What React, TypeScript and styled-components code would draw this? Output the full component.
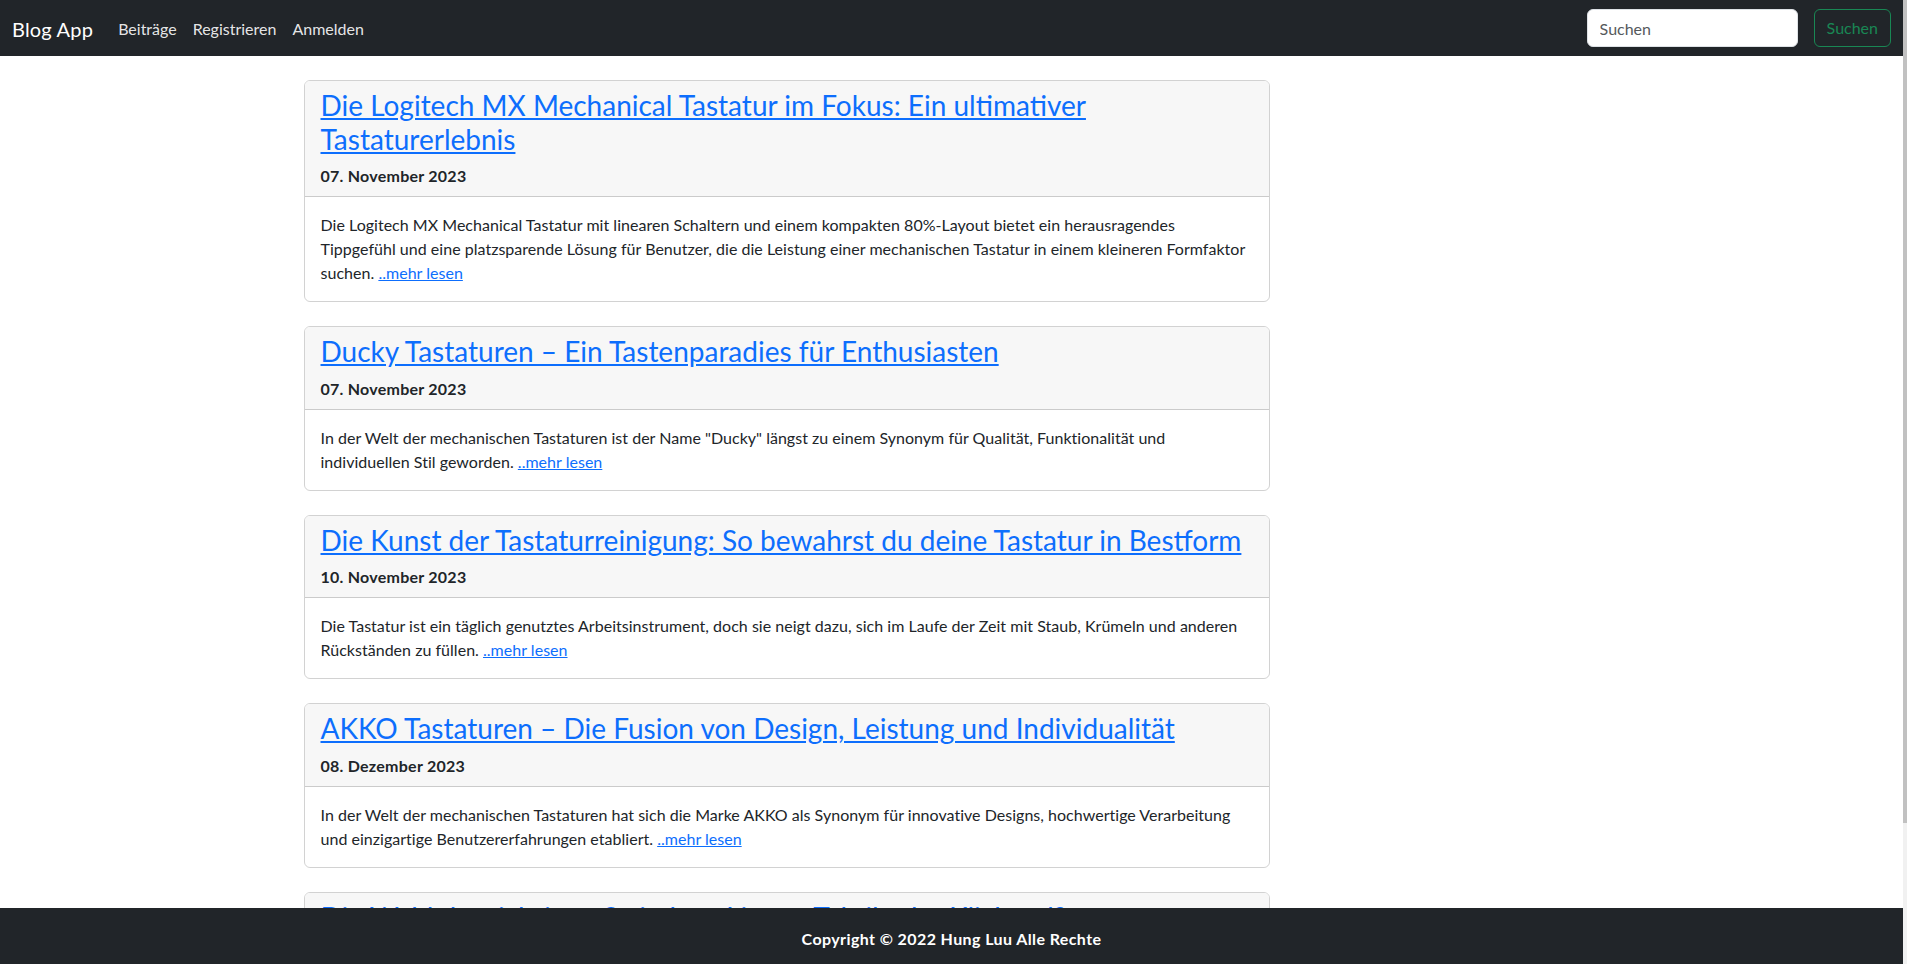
import React from "react";
import styled, { createGlobalStyle } from "styled-components";

const GlobalStyle = createGlobalStyle`
  *, *::before, *::after { box-sizing: border-box; }
  html { overflow: hidden; }
  body {
    margin: 0;
    padding-right: 4px;
    font-family: "Lato", "Liberation Sans", sans-serif;
    font-size: 16px;
    line-height: 1.5;
    color: #212529;
    background: #fff;
  }
`;

const Navbar = styled.nav`
  height: 56px;
  background: #212529;
  padding: 8px 12px;
  display: flex;
  align-items: center;
`;

const Brand = styled.a`
  font-size: 20px;
  line-height: 30px;
  padding: 6px 0 4px;
  margin-right: 17px;
  color: #fff;
  letter-spacing: 0.2px;
  text-decoration: none;
`;

const NavList = styled.ul`
  display: flex;
  list-style: none;
  margin: 0;
  padding: 0;
`;

const NavLink = styled.a`
  display: block;
  padding: 9px 8px 7px;
  color: rgba(255, 255, 255, 0.9);
  text-decoration: none;
`;

const SearchForm = styled.form`
  margin-left: auto;
  display: flex;
  gap: 16px;
`;

const SearchInput = styled.input`
  width: 211px;
  height: 38px;
  padding: 6px 12px;
  font: inherit;
  color: #212529;
  background: #fff;
  border: 1px solid #dee2e6;
  border-radius: 6px;
  &::placeholder { color: #55595c; }
`;

const SearchButton = styled.button`
  height: 38px;
  padding: 6px 12px;
  font: inherit;
  color: #198754;
  background: transparent;
  border: 1px solid #198754;
  border-radius: 6px;
`;

const Main = styled.main`
  max-width: 1320px;
  margin: 24px auto 0;
  padding: 0 12px 49px;
`;

const Row = styled.div`
  display: flex;
  margin: 0 -12px;
`;

const Col = styled.div`
  flex: 0 0 75%;
  padding: 0 12px;
`;

const Card = styled.article`
  border: 1px solid rgba(0, 0, 0, 0.175);
  border-radius: 6px;
  margin-bottom: 24px;
  overflow: hidden;
`;

const CardHeader = styled.header`
  padding: 8px 16px;
  background: #f7f7f7;
  border-bottom: 1px solid rgba(0, 0, 0, 0.175);
`;

const Title = styled.h3`
  margin: -1px 0 8px;
  padding-top: 1px;
  font-size: 28px;
  font-weight: 400;
  line-height: 1.2;
`;

const TitleLink = styled.a`
  color: #0d6efd;
  text-decoration: underline;
  text-underline-offset: 2px;
`;

const DateLine = styled.p`
  margin: 0;
  font-weight: 700;
  letter-spacing: 0.25px;
`;

const CardBody = styled.div`
  padding: 16px;
`;

const Excerpt = styled.p`
  margin: 0;
  letter-spacing: 0.025px;
`;

const MoreLink = styled.a`
  color: #0d6efd;
  text-decoration: underline;
`;

const Footer = styled.footer`
  position: fixed;
  left: 0;
  right: 4px;
  bottom: 0;
  height: 56px;
  background: #212529;
  color: #fff;
  font-weight: 700;
  letter-spacing: 0.4px;
  display: flex;
  align-items: center;
  justify-content: center;
  padding-top: 5px;
`;

const ScrollTrack = styled.div`
  position: fixed;
  top: 0;
  right: 0;
  bottom: 0;
  width: 4px;
  background: #f1f1f1;
`;

const ScrollThumb = styled.div`
  height: 823px;
  background: #c1c1c1;
`;

const posts = [
  {
    title: "Die Logitech MX Mechanical Tastatur im Fokus: Ein ultimativer Tastaturerlebnis",
    date: "07. November 2023",
    text: "Die Logitech MX Mechanical Tastatur mit linearen Schaltern und einem kompakten 80%-Layout bietet ein herausragendes Tippgefühl und eine platzsparende Lösung für Benutzer, die die Leistung einer mechanischen Tastatur in einem kleineren Formfaktor suchen.",
  },
  {
    title: "Ducky Tastaturen – Ein Tastenparadies für Enthusiasten",
    date: "07. November 2023",
    text: 'In der Welt der mechanischen Tastaturen ist der Name "Ducky" längst zu einem Synonym für Qualität, Funktionalität und individuellen Stil geworden.',
  },
  {
    title: "Die Kunst der Tastaturreinigung: So bewahrst du deine Tastatur in Bestform",
    date: "10. November 2023",
    text: "Die Tastatur ist ein täglich genutztes Arbeitsinstrument, doch sie neigt dazu, sich im Laufe der Zeit mit Staub, Krümeln und anderen Rückständen zu füllen.",
  },
  {
    title: "AKKO Tastaturen – Die Fusion von Design, Leistung und Individualität",
    date: "08. Dezember 2023",
    text: "In der Welt der mechanischen Tastaturen hat sich die Marke AKKO als Synonym für innovative Designs, hochwertige Verarbeitung und einzigartige Benutzererfahrungen etabliert.",
  },
  {
    title: "Die Wahl der richtigen Switches: Linear, Taktil oder Klickend?",
    date: "12. Dezember 2023",
    text: "Switches sind das Herzstück jeder mechanischen Tastatur und bestimmen maßgeblich, wie sich das Tippen anfühlt und wie laut die Tastatur im Alltag ist.",
  },
];

export default function App() {
  return (
    <>
      <GlobalStyle />
      <Navbar>
        <Brand href="#">Blog App</Brand>
        <NavList>
          <li><NavLink href="#">Beiträge</NavLink></li>
          <li><NavLink href="#">Registrieren</NavLink></li>
          <li><NavLink href="#">Anmelden</NavLink></li>
        </NavList>
        <SearchForm onSubmit={(e) => e.preventDefault()}>
          <SearchInput type="search" placeholder="Suchen" aria-label="Suchen" />
          <SearchButton type="submit">Suchen</SearchButton>
        </SearchForm>
      </Navbar>
      <Main>
        <Row>
          <Col>
            {posts.map((p) => (
              <Card key={p.title}>
                <CardHeader>
                  <Title>
                    <TitleLink href="#">{p.title}</TitleLink>
                  </Title>
                  <DateLine>{p.date}</DateLine>
                </CardHeader>
                <CardBody>
                  <Excerpt>
                    {p.text} <MoreLink href="#">..mehr lesen</MoreLink>
                  </Excerpt>
                </CardBody>
              </Card>
            ))}
          </Col>
        </Row>
      </Main>
      <Footer>Copyright © 2022 Hung Luu Alle Rechte</Footer>
      <ScrollTrack aria-hidden="true">
        <ScrollThumb />
      </ScrollTrack>
    </>
  );
}
